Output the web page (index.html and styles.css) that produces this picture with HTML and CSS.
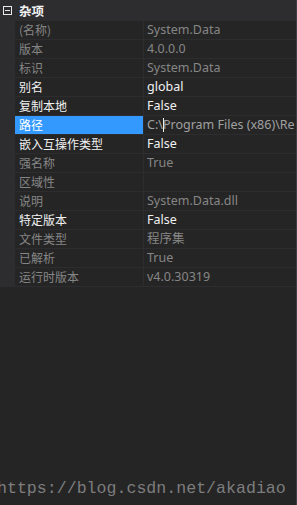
FILE: index.html
```html
<!DOCTYPE html>
<html>
<head>
<meta charset="utf-8">
<link rel="stylesheet" href="styles.css">
</head>
<body>
<div class="grid">
  <div class="header">
    <span class="toggle"><span class="minus"></span></span>
    <span class="htext">杂项</span>
  </div>
  <div class="rows">
    <div class="row dim"><div class="name">(名称)</div><div class="val">System.Data</div></div>
    <div class="row dim"><div class="name">版本</div><div class="val">4.0.0.0</div></div>
    <div class="row dim"><div class="name">标识</div><div class="val">System.Data</div></div>
    <div class="row"><div class="name">别名</div><div class="val">global</div></div>
    <div class="row"><div class="name">复制本地</div><div class="val">False</div></div>
    <div class="row sel"><div class="name">路径</div><div class="val">C:\<span class="caret"></span>Program Files (x86)\Re</div></div>
    <div class="row"><div class="name">嵌入互操作类型</div><div class="val">False</div></div>
    <div class="row dim"><div class="name">强名称</div><div class="val">True</div></div>
    <div class="row dim"><div class="name">区域性</div><div class="val"></div></div>
    <div class="row dim"><div class="name">说明</div><div class="val">System.Data.dll</div></div>
    <div class="row"><div class="name">特定版本</div><div class="val">False</div></div>
    <div class="row dim"><div class="name">文件类型</div><div class="val">程序集</div></div>
    <div class="row dim"><div class="name">已解析</div><div class="val">True</div></div>
    <div class="row dim"><div class="name">运行时版本</div><div class="val">v4.0.30319</div></div>
  </div>
  <div class="filler">
    <div class="mark">https://blog.csdn.net/akadiao</div>
  </div>
</div>
</body>
</html>
```
FILE: styles.css
```css
html, body {
  margin: 0;
  padding: 0;
  background: #252526;
  height: 100%;
}
body {
  font-family: "Noto Sans", "Noto Sans CJK SC", sans-serif;
  font-size: 12px;
  color: #f1f1f1;
  overflow: hidden;
}
.grid {
  height: 505px;
  display: flex;
  flex-direction: column;
  border-right: 1px solid #3f3f46;
  box-sizing: border-box;
}
.header {
  height: 20px;
  background: #2d2d30;
  display: flex;
  align-items: center;
  flex: none;
}
.toggle {
  width: 9px;
  height: 9px;
  box-sizing: border-box;
  border: 1px solid #e8e8e8;
  margin-left: 3px;
  margin-right: 7px;
  display: flex;
  align-items: center;
  justify-content: center;
}
.minus {
  width: 5px;
  height: 1px;
  background: #e8e8e8;
}
.htext {
  font-family: "Noto Sans CJK SC", sans-serif;
  font-weight: bold;
  font-size: 12.5px;
  color: #f1f1f1;
}
.rows {
  flex: none;
  border-left: 15px solid #2d2d30;
}
.row {
  display: grid;
  grid-template-columns: 129px 1fr;
  height: 19px;
  box-sizing: border-box;
  border-bottom: 1px solid #2d2d30;
  line-height: 18px;
}
.row:first-child {
  border-top: 1px solid #2d2d30;
  height: 20px;
}
.name {
  padding-left: 4px;
  border-right: 1px solid #2d2d30;
  white-space: nowrap;
  overflow: hidden;
  font-family: "Noto Sans CJK SC", sans-serif;
}
.val {
  padding-left: 3px;
  white-space: nowrap;
  overflow: hidden;
  font-size: 12.5px;
}
.dim .name, .dim .val {
  color: #858585;
}
.sel .name {
  background: #3399ff;
  color: #ffffff;
}
.sel .val {
  color: #a0a0a0;
}
.caret {
  display: inline-block;
  width: 1px;
  height: 14px;
  background: #f1f1f1;
  vertical-align: -3px;
  margin-right: -1px;
}
.filler {
  flex: 1;
  display: flex;
  flex-direction: column;
  justify-content: flex-end;
  padding-bottom: 6px;
}
.mark {
  font-family: "Liberation Mono", monospace;
  font-size: 16.6px;
  color: #7d7d7d;
  margin-left: -3px;
  white-space: nowrap;
  line-height: 20px;
}
```
